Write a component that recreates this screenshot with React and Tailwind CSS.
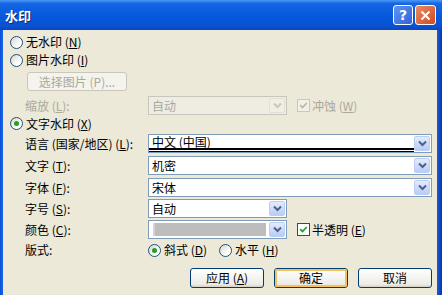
import React from "react";

const U = ({ children }) => <span className="underline underline-offset-1">{children}</span>;

function Radio({ checked }) {
  return (
    <span className="w-[13px] h-[13px] rounded-full border border-[#1C5180] bg-[linear-gradient(135deg,#d6d4ca,#ffffff_70%)] flex items-center justify-center shrink-0">
      {checked && <span className="w-[5px] h-[5px] rounded-full bg-[#21a121]" />}
    </span>
  );
}

function Check({ disabled }) {
  return (
    <span
      className={
        disabled
          ? "w-[13px] h-[13px] border border-[#CAC8BB] bg-[#F2F0E6] flex items-center justify-center shrink-0"
          : "w-[13px] h-[13px] border border-[#1C5180] bg-white flex items-center justify-center shrink-0"
      }
    >
      <svg width="9" height="9" viewBox="0 0 9 9">
        <path d="M1.2 4.2 L3.5 6.5 L7.8 2" stroke={disabled ? "#B9B7A8" : "#21a121"} strokeWidth="1.8" fill="none" />
      </svg>
    </span>
  );
}

function DropBtn({ disabled }) {
  return (
    <div
      className={
        disabled
          ? "w-[16px] m-[1px] rounded-[2px] border border-[#E2E0D6] bg-[#F0EEE6] flex items-center justify-center shrink-0"
          : "w-[16px] m-[1px] rounded-[2px] border border-[#BCCDF5] bg-[linear-gradient(to_bottom,#E3ECFE,#B9CCF7)] flex items-center justify-center shrink-0"
      }
    >
      <svg width="9" height="7" viewBox="0 0 9 7">
        <path d="M1 1.5 L4.5 5 L8 1.5" stroke={disabled ? "#C9C7BA" : "#4D6185"} strokeWidth="2" fill="none" />
      </svg>
    </div>
  );
}

function Combo({ wide, text, disabled, children, underline }) {
  const cls = disabled
    ? "relative flex h-[19px] w-[139px] border border-[#C9C7BA] bg-[#EFEDE3]"
    : wide
    ? "relative flex h-[19px] w-[284px] border border-[#7F9DB9] bg-white"
    : "relative flex h-[19px] w-[139px] border border-[#7F9DB9] bg-white";
  const textCls = disabled
    ? "flex-1 flex items-center pl-[3px] text-[#ACA899]"
    : underline
    ? "flex-1 flex items-center pl-[3px] pb-[3px] text-black"
    : "flex-1 flex items-center pl-[3px] text-black";
  return (
    <div className={cls}>
      <div className={textCls}>
        {text}
        {children}
      </div>
      <DropBtn disabled={disabled} />
      {underline && <div className="absolute left-0 right-[17px] bottom-[0px] h-[4px] border-t-2 border-b border-black" />}
    </div>
  );
}

function Btn({ children, def, disabled }) {
  if (disabled)
    return (
      <div className="w-[100px] h-full rounded-[3px] border border-[#C9C7BA] bg-[#F4F3EE] flex items-center justify-center text-[#ACA899]">
        {children}
      </div>
    );
  return (
    <div className="w-[74px] h-full rounded-[3px] border border-[#003C74] bg-[linear-gradient(to_bottom,#ffffff,#ECEBE6_85%,#D6D0C5)] flex items-center justify-center">
      <div
        className={
          def
            ? "w-full h-full rounded-[2px] border-2 border-[#F6C05A] flex items-center justify-center"
            : "w-full h-full flex items-center justify-center"
        }
      >
        {children}
      </div>
    </div>
  );
}

function Label({ children }) {
  return <div className="w-[123px] shrink-0 flex items-center">{children}</div>;
}

export default function App() {
  return (
    <div className="w-[442px] h-[295px] overflow-hidden flex flex-col font-['Noto_Sans_CJK_SC',sans-serif] text-[12px] leading-none text-black">
      {/* title bar */}
      <div className="h-[30px] shrink-0 flex items-center bg-[linear-gradient(to_bottom,#4a9af7_0%,#1565e4_12%,#0758dc_55%,#0a52d2_85%,#0846c4_100%)] pl-[5px] pr-[6px]">
        <div className="text-white font-bold text-[13px] [text-shadow:1px_1px_0_#0a2a7a] flex-1 pt-[1px]">水印</div>
        <div className="flex gap-[2px]">
          <div className="w-[20px] h-[20px] rounded-[3px] border border-white bg-[linear-gradient(135deg,#5f95f5,#2f63d8)] flex items-center justify-center text-white font-bold text-[14px] font-['DejaVu_Sans',sans-serif]">
            ?
          </div>
          <div className="w-[21px] h-[20px] rounded-[3px] border border-white bg-[linear-gradient(135deg,#ea8a63,#cf4a22)] flex items-center justify-center">
            <svg width="11" height="11" viewBox="0 0 11 11">
              <path d="M1.5 1.5 L9.5 9.5 M9.5 1.5 L1.5 9.5" stroke="white" strokeWidth="2" />
            </svg>
          </div>
        </div>
      </div>
      {/* body */}
      <div className="flex-1 flex">
        <div className="w-[3px] bg-[linear-gradient(to_right,#0a50d6,#1a66e8)]" />
        <div className="flex-1 bg-[#ECE9D8] flex flex-col">
          <div className="mt-[4px] h-[16px] flex items-center gap-[3px] pl-[7px]">
            <Radio />
            <span>
              无水印 (<U>N</U>)
            </span>
          </div>
          <div className="mt-[2px] h-[16px] flex items-center gap-[3px] pl-[7px]">
            <Radio />
            <span>
              图片水印 (<U>I</U>)
            </span>
          </div>
          <div className="mt-[4px] h-[19px] flex pl-[24px]">
            <Btn disabled>选择图片 (P)...</Btn>
          </div>
          <div className="mt-[5px] h-[19px] flex pl-[22px] text-[#ACA899]">
            <Label>
              <span>
                缩放 (<U>L</U>):
              </span>
            </Label>
            <Combo disabled text="自动" />
            <div className="ml-[10px] flex items-center gap-[2px]">
              <Check disabled />
              <span>
                冲蚀 (<U>W</U>)
              </span>
            </div>
          </div>
          <div className="mt-[1px] h-[15px] flex items-center gap-[3px] pl-[7px]">
            <Radio checked />
            <span>
              文字水印 (<U>X</U>)
            </span>
          </div>
          <div className="mt-[3px] h-[19px] flex pl-[22px]">
            <Label>
              <span>
                语言 (国家/地区) (<U>L</U>):
              </span>
            </Label>
            <Combo wide text="中文 (中国)" underline />
          </div>
          <div className="mt-[3px] h-[19px] flex pl-[22px]">
            <Label>
              <span>
                文字 (<U>T</U>):
              </span>
            </Label>
            <Combo wide text="机密" />
          </div>
          <div className="mt-[3px] h-[19px] flex pl-[22px]">
            <Label>
              <span>
                字体 (<U>F</U>):
              </span>
            </Label>
            <Combo wide text="宋体" />
          </div>
          <div className="mt-[2px] h-[19px] flex pl-[22px]">
            <Label>
              <span>
                字号 (<U>S</U>):
              </span>
            </Label>
            <Combo text="自动" />
          </div>
          <div className="mt-[2px] h-[19px] flex pl-[22px]">
            <Label>
              <span>
                颜色 (<U>C</U>):
              </span>
            </Label>
            <Combo>
              <div className="w-[113px] h-[13px] ml-[1px] bg-[#BDBDBD] border-l-2 border-[#D4D4D4]" />
            </Combo>
            <div className="ml-[10px] flex items-center gap-[2px]">
              <Check />
              <span>
                半透明 (<U>E</U>)
              </span>
            </div>
          </div>
          <div className="mt-[3px] h-[16px] flex pl-[22px]">
            <Label>
              <span>版式:</span>
            </Label>
            <div className="flex items-center gap-[3px]">
              <Radio checked />
              <span>
                斜式 (<U>D</U>)
              </span>
            </div>
            <div className="ml-[12px] flex items-center gap-[3px]">
              <Radio />
              <span>
                水平 (<U>H</U>)
              </span>
            </div>
          </div>
          <div className="mt-[10px] h-[20px] flex justify-end gap-[10px] pr-[5px]">
            <Btn>
              应用 (<U>A</U>)
            </Btn>
            <Btn def>确定</Btn>
            <Btn>取消</Btn>
          </div>
        </div>
        <div className="w-[5px] bg-[linear-gradient(to_right,#1a5ad8,#0a36a8)]" />
      </div>
    </div>
  );
}
